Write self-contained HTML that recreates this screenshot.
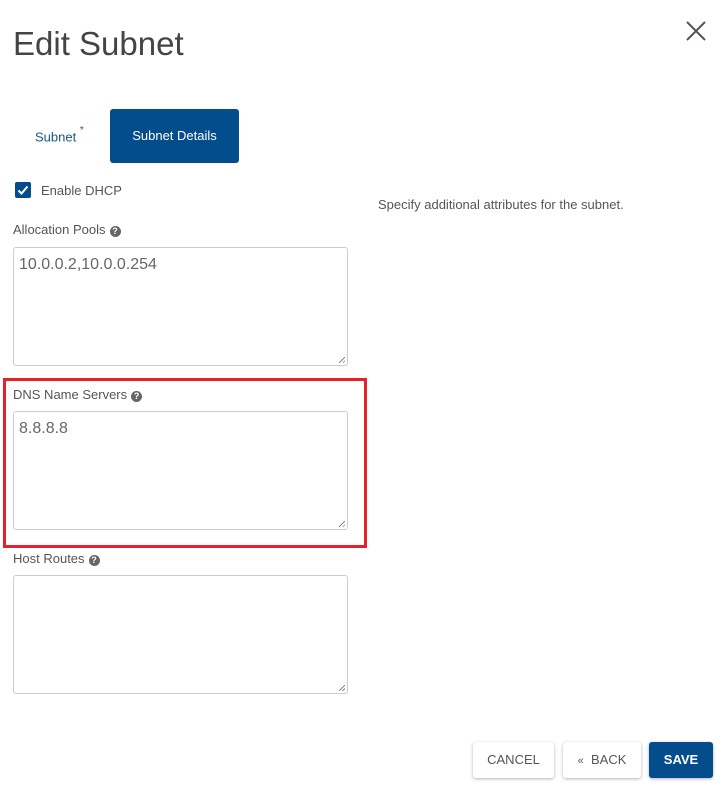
<!DOCTYPE html>
<html><head><style>
body{margin:0;width:728px;height:788px;background:#fff;font-family:"Liberation Sans",sans-serif;position:relative;overflow:hidden;color:#555}
.a{position:absolute}
h1{position:absolute;left:13px;top:25px;margin:0;font-weight:normal;font-size:33px;color:#444}
.lbl{position:absolute;left:13px;font-size:13px;color:#555}
.q{display:inline-block;width:11px;height:11px;border-radius:50%;background:#666;color:#fff;font-size:9px;line-height:11px;text-align:center;font-weight:bold;vertical-align:0px;margin-left:4px}
.ta{position:absolute;left:13px;width:335px;height:119px;border:1px solid #ccc;border-radius:3px;font-size:16px;color:#666;box-sizing:border-box;padding:8px 5px}
.rs{position:absolute;right:2px;bottom:2px;width:6px;height:6px;background:linear-gradient(135deg,transparent 45%,#888 45%,#888 55%,transparent 55%,transparent 75%,#888 75%,#888 85%,transparent 85%)}
.btn{position:absolute;top:742px;height:36px;border-radius:3px;box-shadow:0 1px 3px rgba(0,0,0,.3);font-size:13px;line-height:36px;text-align:center;color:#555;background:#fff}
</style></head><body>
<h1>Edit Subnet</h1>
<svg class="a" style="left:685px;top:20px" width="22" height="22"><path d="M2 2L20 20M20 2L2 20" stroke="#555" stroke-width="2"/></svg>
<div class="a" style="left:35px;top:128px;font-size:13px;color:#1a5590">Subnet <sup style="font-size:10px;position:relative;top:-3px">*</sup></div>
<div class="a" style="left:110px;top:109px;width:129px;height:54px;background:#044d8c;border-radius:3px;color:#fff;font-size:13px;line-height:54px;text-align:center">Subnet Details</div>
<div class="a" style="left:15px;top:182px;width:16px;height:16px;background:#044d8c;border-radius:2px"><svg width="16" height="16"><path d="M3.5 8.5L6.5 11.5L12.5 4.5" stroke="#fff" stroke-width="2" fill="none"/></svg></div>
<div class="a" style="left:41px;top:183px;font-size:13px">Enable DHCP</div>
<div class="a" style="left:378px;top:197px;font-size:13px">Specify additional attributes for the subnet.</div>
<div class="lbl" style="top:222px">Allocation Pools<span class="q">?</span></div>
<div class="ta" style="top:247px">10.0.0.2,10.0.0.254<div class="rs"></div></div>
<div class="a" style="left:3px;top:378px;width:358px;height:164px;border:3px solid #e8202a"></div>
<div class="lbl" style="top:387px">DNS Name Servers<span class="q">?</span></div>
<div class="ta" style="top:411px">8.8.8.8<div class="rs"></div></div>
<div class="lbl" style="top:551px">Host Routes<span class="q">?</span></div>
<div class="ta" style="top:575px"><div class="rs"></div></div>
<div class="btn" style="left:473px;width:81px">CANCEL</div>
<div class="btn" style="left:563px;width:78px"><span style="font-size:11px">«</span>&nbsp; BACK</div>
<div class="btn" style="left:649px;width:64px;background:#044d8c;color:#fff;font-weight:bold">SAVE</div>
</body></html>
